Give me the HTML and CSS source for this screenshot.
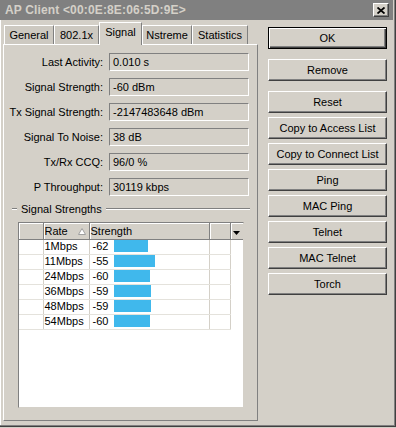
FILE: index.html
```html
<!DOCTYPE html>
<html>

<head>
	<title>AP Client</title>
	<link rel="stylesheet" href="styles.css">
</head>

<body>
	<div class="window">
		<div class="titlebar">
			<span class="title">AP Client &lt;00:0E:8E:06:5D:9E&gt;</span>
			<span class="close">
				<svg width="8" height="7" viewBox="0 0 8 7">
					<path d="M0.5 0.5 L7.5 6.5 M7.5 0.5 L0.5 6.5" stroke="#000" stroke-width="1.8" fill="none"/>
				</svg>
			</span>
		</div>

		<div class="main">
			<div class="tabbox">
				<div class="tabs">
					<div class="tab tab-general">General</div>
					<div class="tab tab-8021x">802.1x</div>
					<div class="tab tab-signal active">Signal</div>
					<div class="tab tab-nstreme">Nstreme</div>
					<div class="tab tab-stats">Statistics</div>
				</div>

				<div class="panel">
					<div class="field"><label>Last Activity:</label><div class="value">0.010 s</div></div>
					<div class="field"><label>Signal Strength:</label><div class="value">-60 dBm</div></div>
					<div class="field"><label>Tx Signal Strength:</label><div class="value">-2147483648 dBm</div></div>
					<div class="field"><label>Signal To Noise:</label><div class="value">38 dB</div></div>
					<div class="field"><label>Tx/Rx CCQ:</label><div class="value">96/0 %</div></div>
					<div class="field"><label>P Throughput:</label><div class="value">30119 kbps</div></div>

					<div class="group"><span>Signal Strengths</span></div>

					<div class="grid">
						<table>
							<thead>
								<tr>
									<th class="c0"></th>
									<th class="c1">Rate<svg class="sort" width="8" height="7" viewBox="0 0 8 7">
											<path d="M4 0.5 L7.5 6.5 L0.5 6.5 Z" fill="#fff" stroke="#a0a0a0" stroke-width="1"/>
										</svg></th>
									<th class="c2">Strength</th>
									<th class="c3"></th>
									<th class="c4">
										<svg width="7" height="4" viewBox="0 0 7 4"><path d="M0 0 L7 0 L3.5 4 Z" fill="#000"/></svg>
									</th>
								</tr>
							</thead>
							<tbody>
								<tr><td></td><td>1Mbps</td><td><span class="num">-62</span><span class="bar" style="width: 34px"></span></td><td></td></tr>
								<tr><td></td><td>11Mbps</td><td><span class="num">-55</span><span class="bar" style="width: 41px"></span></td><td></td></tr>
								<tr><td></td><td>24Mbps</td><td><span class="num">-60</span><span class="bar" style="width: 36px"></span></td><td></td></tr>
								<tr><td></td><td>36Mbps</td><td><span class="num">-59</span><span class="bar" style="width: 37px"></span></td><td></td></tr>
								<tr><td></td><td>48Mbps</td><td><span class="num">-59</span><span class="bar" style="width: 37px"></span></td><td></td></tr>
								<tr><td></td><td>54Mbps</td><td><span class="num">-60</span><span class="bar" style="width: 36px"></span></td><td></td></tr>
							</tbody>
						</table>
					</div>
				</div>
			</div>

			<div class="side">
				<button class="btn default">OK</button>
				<button class="btn spaced">Remove</button>
				<button class="btn spaced">Reset</button>
				<button class="btn">Copy to Access List</button>
				<button class="btn">Copy to Connect List</button>
				<button class="btn">Ping</button>
				<button class="btn">MAC Ping</button>
				<button class="btn">Telnet</button>
				<button class="btn">MAC Telnet</button>
				<button class="btn">Torch</button>
			</div>
		</div>
	</div>
</body>

</html>
```

FILE: styles.css
```css
body {
	margin: 0;
	font-family: "Liberation Sans", Arial, sans-serif;
	font-size: 11px;
	color: #000;
	background-color: #d4d0c8;
}

.window {
	width: 396px;
	height: 427px;
	box-sizing: border-box;
	background-color: #d4d0c8;
	border-right: 1px solid #404040;
	border-bottom: 1px solid #404040;
	box-shadow: inset -1px -1px #808080, inset 1px 0 #fff;
}

/* Thanh tiêu đề */
.titlebar {
	height: 20px;
	margin-right: 2px;
	background-color: #808080;
	display: flex;
	align-items: center;
	justify-content: space-between;
	padding: 0 4px 0 5px;
}

.title {
	color: #d4d0c8;
	font-weight: bold;
	font-size: 12px;
	letter-spacing: 0.15px;
}

.close {
	width: 14px;
	height: 12px;
	display: flex;
	align-items: center;
	justify-content: center;
	background-color: #d4d0c8;
	border: 1px solid;
	border-color: #fff #404040 #404040 #fff;
	box-shadow: inset -1px -1px #808080;
}

.main {
	display: flex;
	padding-left: 3px;
}

/* Các tab */
.tabbox {
	width: 255px;
}

.tabs {
	height: 24px;
	display: flex;
	align-items: flex-end;
	padding-left: 1px;
}

.tab {
	height: 18px;
	line-height: 18px;
	box-sizing: content-box;
	text-align: center;
	border: 1px solid;
	border-bottom: none;
	border-color: #fff #808080 #808080 #fff;
	background-color: #cdc9c1;
}

.tab-general { width: 48px; }
.tab-8021x { width: 43px; }
.tab-signal { width: 41px; }
.tab-nstreme { width: 48px; }
.tab-stats { width: 54px; }

.tab.active {
	height: 22px;
	line-height: 19px;
	position: relative;
	top: 1px;
	background-color: #d4d0c8;
	z-index: 1;
}

.panel {
	height: 377px;
	box-sizing: border-box;
	border: 1px solid;
	border-color: #fff #808080 #808080 #fff;
	padding-top: 8px;
}

.field {
	display: flex;
	align-items: center;
	margin-bottom: 7px;
}

.field label {
	width: 99px;
	text-align: right;
}

.value {
	width: 140px;
	height: 18px;
	line-height: 16px;
	margin-left: 6px;
	box-sizing: border-box;
	padding-left: 3px;
	border: 1px solid;
	border-color: #808080 #fff #fff #808080;
}

/* Nhóm Signal Strengths */
.group {
	display: flex;
	align-items: center;
	margin: -1px 7px 0 8px;
	height: 14px;
}

.group::before,
.group::after {
	content: "";
	height: 0;
	border-top: 1px solid #808080;
	border-bottom: 1px solid #fff;
}

.group::before {
	width: 5px;
}

.group::after {
	flex: 1;
}

.group span {
	padding: 0 4px;
}

.grid {
	width: 226px;
	height: 186px;
	box-sizing: border-box;
	margin: 6px 0 0 14px;
	background-color: #fff;
	border: 1px solid;
	border-color: #808080 #d4d0c8 #d4d0c8 #808080;
}

.grid table {
	border-collapse: collapse;
	table-layout: fixed;
	width: 224px;
}

.grid th {
	height: 16px;
	box-sizing: border-box;
	padding: 0 0 0 1px;
	font-weight: normal;
	text-align: left;
	white-space: nowrap;
	background-color: #d4d0c8;
	border-right: 1px solid #808080;
	border-bottom: 1px solid #808080;
	box-shadow: inset 1px 1px #fff;
}

.grid th.c4 {
	border-right: none;
	text-align: center;
	padding: 0;
}

.c0 { width: 24px; }
.c1 { width: 46px; }
.c2 { width: 120px; }
.c3 { width: 21px; }
.c4 { width: 13px; }

.sort {
	margin-left: 10px;
}

.grid td {
	height: 15px;
	line-height: 13px;
	box-sizing: border-box;
	padding: 0 0 0 1px;
	border-right: 1px solid #d4d0c8;
	border-bottom: 1px solid #e4e2dc;
	white-space: nowrap;
}

.num {
	display: inline-block;
	width: 21px;
	padding-left: 2px;
}

.bar {
	display: inline-block;
	height: 12px;
	vertical-align: -2px;
	background-color: #40b8ec;
}

/* Các nút bên phải */
.side {
	width: 119px;
	margin-left: 10px;
	padding-top: 7px;
	display: flex;
	flex-direction: column;
}

.btn {
	height: 22px;
	margin-bottom: 4px;
	padding: 0;
	font-family: inherit;
	font-size: 11px;
	color: #000;
	background-color: #d4d0c8;
	border: 1px solid;
	border-color: #fff #404040 #404040 #fff;
	box-shadow: inset -1px -1px #808080;
}

.btn.default {
	border-color: #000;
	box-shadow: inset 1px 1px #fff, inset -1px -1px #404040, inset -2px -2px #808080;
}

.btn.spaced {
	margin-top: 6px;
}
```
